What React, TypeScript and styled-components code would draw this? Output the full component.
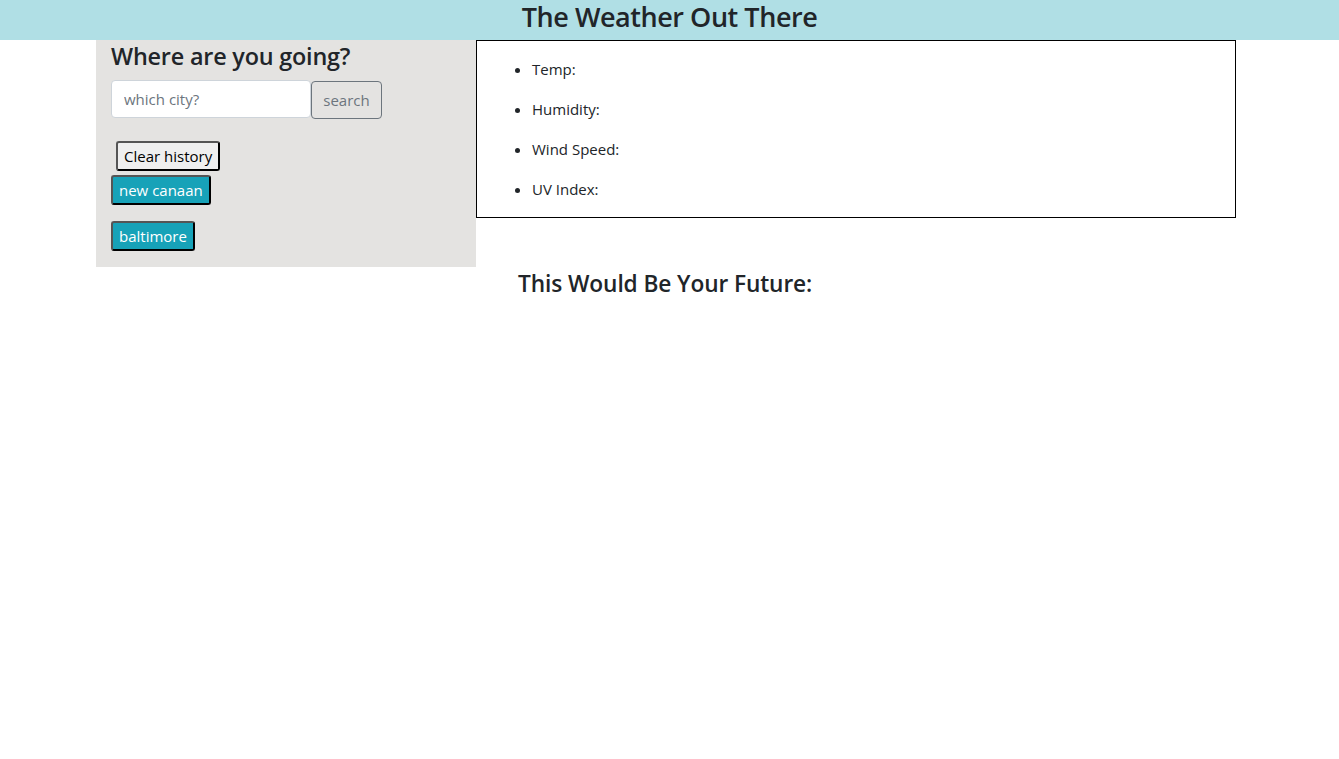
import React from "react";
import styled, { createGlobalStyle } from "styled-components";

const Global = createGlobalStyle`
  html, body { margin: 0; padding: 0; background: #fff; }
  body {
    font-family: "Open Sans", "Noto Sans", Arial, sans-serif;
    font-size: 16px;
    line-height: 1.5;
    color: #212529;
  }
  * { box-sizing: border-box; }
`;

const Header = styled.header`
  height: 40px;
  background: #b0dfe5;
  display: flex;
  align-items: center;
  justify-content: center;
  padding-bottom: 6px;
`;

const Title = styled.h1`
  margin: 0;
  font-size: 27px;
  font-weight: 600;
  line-height: 1.2;
  letter-spacing: -0.45px;
`;

const Main = styled.main`
  display: flex;
  align-items: flex-start;
  margin-left: 96px;
  width: 1140px;
`;

const Sidebar = styled.aside`
  width: 380px;
  background: #e4e3e1;
  padding: 0 15px;
  display: flex;
  flex-direction: column;
  align-items: flex-start;
`;

const SideHeading = styled.h3`
  margin: 2px 0 10px;
  font-size: 23.4px;
  font-weight: 600;
  line-height: 1.2;
  letter-spacing: -0.2px;
`;

const SearchRow = styled.div`
  display: flex;
  align-items: flex-start;
`;

const CityInput = styled.input`
  width: 200px;
  height: 38px;
  padding: 6px 12px;
  font: inherit;
  font-size: 15px;
  color: #495057;
  background: #fff;
  border: 1px solid #ced4da;
  border-radius: 4px;
  outline: none;
  &::placeholder { color: #6c757d; }
`;

const SearchButton = styled.button`
  margin-top: 1px;
  height: 38px;
  width: 71px;
  padding: 0;
  font: inherit;
  font-size: 15px;
  color: #6c757d;
  background: transparent;
  border: 1px solid #6c757d;
  border-radius: 4px;
`;

const ClearButton = styled.button`
  flex-shrink: 0;
  margin: 22px 0 4px 5px;
  height: 30px;
  padding: 0 6px;
  font: inherit;
  font-size: 15px;
  color: #000;
  background: #efefef;
  border: 2px outset #555;
  border-radius: 3px;
`;

const CityButton = styled.button`
  flex-shrink: 0;
  height: 30px;
  padding: 0 6px;
  font: inherit;
  font-size: 15px;
  color: #fff;
  background: #17a2b8;
  border: 2px outset #555;
  border-radius: 3px;
  margin-bottom: 16px;
`;

const Content = styled.section`
  width: 760px;
`;

const InfoBox = styled.div`
  border: 1px solid #000;
  height: 178px;
  padding-top: 16px;
`;

const InfoList = styled.ul`
  margin: 0;
  padding-left: 55px;
  font-size: 15px;
`;

const InfoItem = styled.li`
  line-height: 24px;
  margin-bottom: 16px;
`;

const FutureHeading = styled.h3`
  margin: 52px 0 0 42px;
  font-size: 22.7px;
  font-weight: 600;
  line-height: 1.2;
  letter-spacing: -0.1px;
`;

export default function App() {
  return (
    <>
      <Global />
      <Header>
        <Title>The Weather Out There</Title>
      </Header>
      <Main>
        <Sidebar>
          <SideHeading>Where are you going?</SideHeading>
          <SearchRow>
            <CityInput placeholder="which city?" />
            <SearchButton>search</SearchButton>
          </SearchRow>
          <ClearButton>Clear history</ClearButton>
          <CityButton>new canaan</CityButton>
          <CityButton>baltimore</CityButton>
        </Sidebar>
        <Content>
          <InfoBox>
            <InfoList>
              <InfoItem>Temp:</InfoItem>
              <InfoItem>Humidity:</InfoItem>
              <InfoItem>Wind Speed:</InfoItem>
              <InfoItem>UV Index:</InfoItem>
            </InfoList>
          </InfoBox>
          <FutureHeading>This Would Be Your Future:</FutureHeading>
        </Content>
      </Main>
    </>
  );
}
